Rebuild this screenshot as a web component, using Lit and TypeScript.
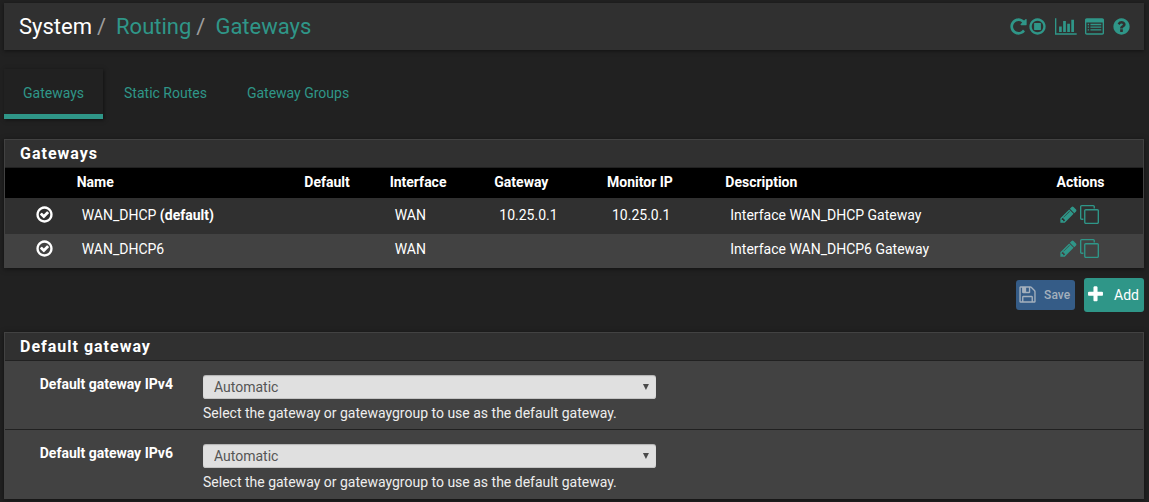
import { LitElement, html, css, svg } from "lit";
import { customElement, property } from "lit/decorators.js";

interface Glyph {
  width: number;
  path: string;
}

const CIRCLE =
  "q0 209-103 385.5t-279.5 279.5-385.5 103-385.5-103-279.5-279.5-103-385.5 103-385.5 279.5-279.5 385.5-103 385.5 103 279.5 279.5 103 385.5z";

const box = (x: number, y: number, w: number, h: number) => `M${x} ${y}h${w}v${h}h${-w}z`;

// Glyphs are drawn on a grid 1792 units high.
const GLYPHS: Record<string, Glyph> = {
  repeat: {
    width: 1792,
    path: "M1664 256v448q0 26-19 45t-45 19h-448q-42 0-59-40-17-39 14-69l138-138q-148-137-349-137-104 0-198.5 40.5t-163.5 109.5-109.5 163.5-40.5 198.5 40.5 198.5 109.5 163.5 163.5 109.5 198.5 40.5q119 0 225-52t179-147q7-10 23-12 15 0 25 9l137 138q9 8 9.5 20.5t-7.5 22.5q-109 132-264 204.5t-327 72.5q-156 0-298-61t-245-164-164-245-61-298 61-298 164-245 245-164 298-61q147 0 284.5 55.5t244.5 156.5l130-129q29-31 70-14 39 17 39 59z",
  },
  stop: {
    width: 1792,
    path:
      "M1664 896" + CIRCLE +
      "M896 1440q148 0 273-73t198-198 73-273-73-273-198-198-273-73-273 73-198 198-73 273 73 273 198 198 273 73z" +
      "M608 1216q-14 0-23-9t-9-23v-576q0-14 9-23t23-9h576q14 0 23 9t9 23v576q0 14-9 23t-23 9h-576z",
  },
  chart: {
    width: 2048,
    path: "M640 896v512h-256v-512h256zm384-512v1024h-256v-1024h256zm1024 1152v128h-2048v-1536h128v1408h1920zm-640-896v768h-256v-768h256zm384-384v1152h-256v-1152h256z",
  },
  list: {
    width: 1792,
    path:
      "M160 128h1472q66 0 113 47t47 113v1216q0 66-47 113t-113 47h-1472q-66 0-113-47t-47-113v-1216q0-66 47-113t113-47z" +
      "M128 512v992q0 32 32 32h1472q32 0 32-32v-992z" +
      [640, 896, 1152].map((y) => box(256, y, 128, 128) + box(512, y, 1024, 128)).join(""),
  },
  help: {
    width: 1792,
    path:
      "M1024 1376v-192q0-14-9-23t-23-9h-192q-14 0-23 9t-9 23v192q0 14 9 23t23 9h192q14 0 23-9t9-23zm256-672q0-88-55.5-163t-138.5-116-170-41q-243 0-371 213-15 24 8 42l132 100q7 6 19 6 16 0 25-12 53-68 86-92 34-24 86-24 48 0 85.5 26t37.5 59q0 38-20 61t-68 45q-63 28-115.5 86.5t-52.5 125.5v36q0 14 9 23t23 9h192q14 0 23-9t9-23q0-19 21.5-49.5t54.5-49.5q32-18 49-28.5t46-35 44.5-48 28-60.5 12.5-81zm384 192" + CIRCLE,
  },
  check: {
    width: 1792,
    path:
      "M1299 813l-422 422q-19 19-45 19t-45-19l-294-294q-19-19-19-45t19-45l102-102q19-19 45-19t45 19l147 147 275-275q19-19 45-19t45 19l102 102q19 19 19 45t-19 45zm141 83q0-148-73-273t-198-198-273-73-273 73-198 198-73 273 73 273 198 198 273 73 273-73 198-198 73-273zm224 0" + CIRCLE,
  },
  pencil: {
    width: 1792,
    path: "M491 1536l91-91-235-235-91 91v107h128v128h107zm523-928q0-22-22-22-10 0-17 7l-542 542q-7 7-7 17 0 22 22 22 10 0 17-7l542-542q7-7 7-17zm-54-192l416 416-832 832h-416v-416zm683 96q0 53-37 90l-166 166-416-416 166-165q36-38 90-38 53 0 91 38l235 234q37 39 37 91z",
  },
  clone: {
    width: 1792,
    path: "M1664 1632v-1088q0-13-9.5-22.5t-22.5-9.5h-1088q-13 0-22.5 9.5t-9.5 22.5v1088q0 13 9.5 22.5t22.5 9.5h1088q13 0 22.5-9.5t9.5-22.5zm128-1088v1088q0 66-47 113t-113 47h-1088q-66 0-113-47t-47-113v-1088q0-66 47-113t113-47h1088q66 0 113 47t47 113zm-384-384v160h-128v-160q0-13-9.5-22.5t-22.5-9.5h-1088q-13 0-22.5 9.5t-9.5 22.5v1088q0 13 9.5 22.5t22.5 9.5h160v128h-160q-66 0-113-47t-47-113v-1088q0-66 47-113t113-47h1088q66 0 113 47t47 113z",
  },
  save: {
    width: 1792,
    path: "M512 1536h768v-384h-768v384zm896 0h128v-896q0-14-10-38.5t-20-34.5l-281-281q-10-10-34-20t-39-10v416q0 40-28 68t-68 28h-576q-40 0-68-28t-28-68v-416h-128v1280h128v-416q0-40 28-68t68-28h832q40 0 68 28t28 68v416zm-384-928v-320q0-13-9.5-22.5t-22.5-9.5h-192q-13 0-22.5 9.5t-9.5 22.5v320q0 13 9.5 22.5t22.5 9.5h192q13 0 22.5-9.5t9.5-22.5zm640 32v928q0 40-28 68t-68 28h-1344q-40 0-68-28t-28-68v-1344q0-40 28-68t68-28h928q40 0 88 20t76 48l280 280q28 28 48 76t20 88z",
  },
  plus: {
    width: 1792,
    path: "M1600 736v192q0 40-28 68t-68 28h-416v416q0 40-28 68t-68 28h-192q-40 0-68-28t-28-68v-416h-416q-40 0-68-28t-28-68v-192q0-40 28-68t68-28h416v-416q0-40 28-68t68-28h192q40 0 68 28t28 68v416h416q40 0 68 28t28 68z",
  },
};

@customElement("gw-icon")
export class GwIcon extends LitElement {
  @property() name = "check";

  static styles = css`
    :host {
      display: inline-flex;
      height: 19px;
    }
    .glyph {
      display: block;
      height: 100%;
      fill: currentColor;
      fill-rule: evenodd;
    }
  `;

  render() {
    const glyph = GLYPHS[this.name];
    return html`<svg class="glyph" viewBox="0 0 ${glyph.width} 1792" aria-hidden="true">
      ${svg`<path d=${glyph.path}></path>`}
    </svg>`;
  }
}

interface Gateway {
  name: string;
  isDefault: boolean;
  iface: string;
  gateway: string;
  monitor: string;
  description: string;
}

const GATEWAYS: Gateway[] = [
  {
    name: "WAN_DHCP",
    isDefault: true,
    iface: "WAN",
    gateway: "10.25.0.1",
    monitor: "10.25.0.1",
    description: "Interface WAN_DHCP Gateway",
  },
  {
    name: "WAN_DHCP6",
    isDefault: false,
    iface: "WAN",
    gateway: "",
    monitor: "",
    description: "Interface WAN_DHCP6 Gateway",
  },
];

@customElement("app-root")
export class AppRoot extends LitElement {
  static styles = css`
    :host {
      display: block;
      box-sizing: border-box;
      min-height: 100vh;
      padding: 3px 5px 3px 4px;
      background: #212121;
      color: #fff;
      font: 14px/20px Roboto, sans-serif;
    }
    * {
      box-sizing: border-box;
    }
    a {
      color: #2f9688;
      text-decoration: none;
    }
    .header {
      display: flex;
      align-items: center;
      justify-content: space-between;
      height: 47px;
      padding: 0 13px 0 15px;
      background: #303030;
      box-shadow: 0 1px 4px rgba(0, 0, 0, 0.5);
    }
    .crumbs {
      display: flex;
      margin: 0;
      padding: 0;
      list-style: none;
      font-size: 22px;
      line-height: 28px;
    }
    .crumb + .crumb::before {
      content: "/";
      padding: 0 10px 0 5px;
      color: #9e9e9e;
    }
    .tools {
      display: flex;
      align-items: center;
      gap: 8px;
    }
    .tool {
      display: flex;
    }
    .service {
      display: flex;
    }
    .tabs {
      display: flex;
      gap: 2px;
      margin-top: 19px;
    }
    .tab {
      padding: 14px 19px 11px;
      border-bottom: 5px solid transparent;
    }
    .tab.active {
      border-bottom-color: #2f9688;
      box-shadow: 1px 1px 4px rgba(0, 0, 0, 0.5);
    }
    .panel {
      border: 1px solid #424242;
      background: #424242;
      box-shadow: 0 1px 5px rgba(0, 0, 0, 0.5);
    }
    .gateways {
      margin-top: 20px;
      border-bottom: 0;
    }
    .heading {
      margin: 0;
      padding: 4px 15px 3px;
      border-bottom: 1px solid #212121;
      background: #303030;
      font-size: 16px;
      line-height: 20px;
      font-weight: 700;
      letter-spacing: 1px;
    }
    .table {
      width: 100%;
      table-layout: fixed;
      border-collapse: collapse;
    }
    .table th {
      padding: 4px 0 6px;
      background: #000;
      font-weight: 700;
      text-align: left;
    }
    .table td {
      padding: 5px 5px 9px;
      vertical-align: top;
    }
    .table tr.odd td {
      padding-top: 7px;
      background: #303030;
    }
    .table td.status {
      padding-left: 30px;
    }
    .table td.actions {
      padding-left: 3px;
    }
    .c-status { width: 6.3%; }
    .c-name { width: 20%; }
    .c-default { width: 7.5%; }
    .c-iface { width: 9.2%; }
    .c-gateway { width: 9.9%; }
    .c-monitor { width: 10.4%; }
    .c-desc { width: 29.1%; }
    .cell {
      display: flex;
      align-items: center;
      gap: 2px;
      height: 18px;
    }
    .buttons {
      display: flex;
      align-items: center;
      justify-content: flex-end;
      gap: 9px;
      margin-top: 10px;
    }
    .btn {
      display: flex;
      align-items: center;
      gap: 9px;
      height: 34px;
      padding: 0 5px 1px 2px;
      border: 0;
      border-radius: 3px;
      background: #2f9688;
      color: #fff;
      font: 14px/20px Roboto, sans-serif;
    }
    .btn.save {
      height: 30px;
      gap: 7px;
      background: #355c87;
      color: #a4b0bd;
      font-size: 12px;
      font-weight: 500;
    }
    .defaults {
      margin-top: 20px;
    }
    .field {
      display: grid;
      grid-template-columns: 168px 39.8%;
      column-gap: 30px;
      padding: 14px 0 6px;
    }
    .field + .field {
      border-top: 1px solid #212121;
    }
    .label {
      font-weight: 700;
      line-height: 18px;
      text-align: right;
      align-self: start;
    }
    .select-wrap {
      display: grid;
      align-items: center;
    }
    .select {
      grid-area: 1 / 1;
      appearance: none;
      width: 100%;
      height: 24px;
      padding: 0 11px;
      border: 0;
      border-radius: 3px;
      background: #e0e0e0;
      box-shadow: inset 0 1px 1px rgba(0, 0, 0, 0.2), inset 0 -1px 0 #c4c4c4;
      color: #555;
      font: 14px/20px Roboto, sans-serif;
    }
    .arrow {
      grid-area: 1 / 1;
      justify-self: end;
      width: 6px;
      height: 6px;
      margin-right: 7px;
      background: #4a4a4a;
      clip-path: polygon(0 0, 100% 0, 50% 100%);
      pointer-events: none;
    }
    .help {
      margin-top: 4px;
      color: #eee;
    }
  `;

  private renderRow(gw: Gateway, index: number) {
    return html`<tr class=${index % 2 === 0 ? "odd" : "even"}>
      <td class="status"><span class="cell"><gw-icon name="check"></gw-icon></span></td>
      <td>${gw.name} ${gw.isDefault ? html`<strong>(default)</strong>` : ""}</td>
      <td></td>
      <td>${gw.iface}</td>
      <td>${gw.gateway}</td>
      <td>${gw.monitor}</td>
      <td>${gw.description}</td>
      <td class="actions">
        <span class="cell">
          <a class="tool" href="#edit" aria-label="Edit gateway"><gw-icon name="pencil"></gw-icon></a>
          <a class="tool" href="#copy" aria-label="Copy gateway"><gw-icon name="clone"></gw-icon></a>
        </span>
      </td>
    </tr>`;
  }

  private renderField(id: string, label: string) {
    return html`<div class="field">
      <label class="label" for=${id}>${label}</label>
      <div>
        <div class="select-wrap">
          <select class="select" id=${id}>
            <option>Automatic</option>
          </select>
          <span class="arrow"></span>
        </div>
        <div class="help">Select the gateway or gatewaygroup to use as the default gateway.</div>
      </div>
    </div>`;
  }

  render() {
    return html`
      <header class="header">
        <ol class="crumbs">
          <li class="crumb">System</li>
          <li class="crumb"><a href="#routing">Routing</a></li>
          <li class="crumb"><a href="#gateways">Gateways</a></li>
        </ol>
        <div class="tools">
          <span class="service">
            <a class="tool" href="#restart" aria-label="Restart service"><gw-icon name="repeat"></gw-icon></a>
            <a class="tool" href="#stop" aria-label="Stop service"><gw-icon name="stop"></gw-icon></a>
          </span>
          <a class="tool" href="#monitoring" aria-label="Monitoring"><gw-icon name="chart"></gw-icon></a>
          <a class="tool" href="#logs" aria-label="Logs"><gw-icon name="list"></gw-icon></a>
          <a class="tool" href="#help" aria-label="Help"><gw-icon name="help"></gw-icon></a>
        </div>
      </header>

      <nav class="tabs">
        <a class="tab active" href="#gateways">Gateways</a>
        <a class="tab" href="#routes">Static Routes</a>
        <a class="tab" href="#groups">Gateway Groups</a>
      </nav>

      <section class="panel gateways">
        <h2 class="heading">Gateways</h2>
        <table class="table">
          <colgroup>
            <col class="c-status" />
            <col class="c-name" />
            <col class="c-default" />
            <col class="c-iface" />
            <col class="c-gateway" />
            <col class="c-monitor" />
            <col class="c-desc" />
            <col />
          </colgroup>
          <thead>
            <tr>
              <th></th>
              <th>Name</th>
              <th>Default</th>
              <th>Interface</th>
              <th>Gateway</th>
              <th>Monitor IP</th>
              <th>Description</th>
              <th>Actions</th>
            </tr>
          </thead>
          <tbody>
            ${GATEWAYS.map((gw, index) => this.renderRow(gw, index))}
          </tbody>
        </table>
      </section>

      <div class="buttons">
        <button class="btn save" type="button" disabled><gw-icon name="save"></gw-icon>Save</button>
        <button class="btn" type="button"><gw-icon name="plus"></gw-icon>Add</button>
      </div>

      <section class="panel defaults">
        <h2 class="heading">Default gateway</h2>
        ${this.renderField("gateway-v4", "Default gateway IPv4")}
        ${this.renderField("gateway-v6", "Default gateway IPv6")}
      </section>
    `;
  }
}
